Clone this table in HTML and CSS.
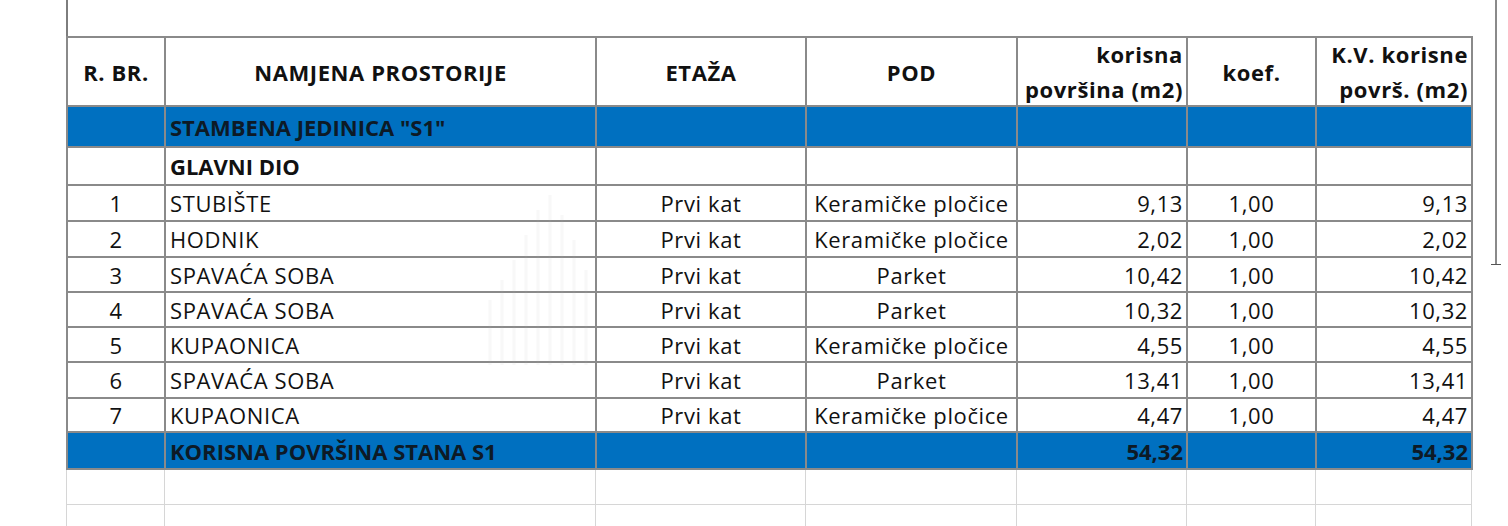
FILE: index.html
```html
<!DOCTYPE html>
<html lang="hr">
<head>
<meta charset="utf-8">
<title>Stambena jedinica S1</title>
<link rel="stylesheet" href="styles.css">
</head>
<body>
<div class="sheet">
  <div class="frame-top"></div>
  <div class="grid main">
    <div class="c hd">R. BR.</div>
    <div class="c hd">NAMJENA PROSTORIJE</div>
    <div class="c hd">ETAŽA</div>
    <div class="c hd">POD</div>
    <div class="c hd right two">korisna<br>površina (m2)</div>
    <div class="c hd">koef.</div>
    <div class="c hd right two">K.V. korisne<br>površ. (m2)</div>

    <div class="c blue"></div>
    <div class="c blue b left">STAMBENA JEDINICA "S1"</div>
    <div class="c blue"></div>
    <div class="c blue"></div>
    <div class="c blue"></div>
    <div class="c blue"></div>
    <div class="c blue"></div>

    <div class="c"></div>
    <div class="c b left">GLAVNI DIO</div>
    <div class="c"></div>
    <div class="c"></div>
    <div class="c"></div>
    <div class="c"></div>
    <div class="c"></div>

    <div class="c">1</div><div class="c left">STUBIŠTE</div><div class="c">Prvi kat</div><div class="c">Keramičke pločice</div><div class="c right">9,13</div><div class="c">1,00</div><div class="c right">9,13</div>
    <div class="c">2</div><div class="c left">HODNIK</div><div class="c">Prvi kat</div><div class="c">Keramičke pločice</div><div class="c right">2,02</div><div class="c">1,00</div><div class="c right">2,02</div>
    <div class="c">3</div><div class="c left">SPAVAĆA SOBA</div><div class="c">Prvi kat</div><div class="c">Parket</div><div class="c right">10,42</div><div class="c">1,00</div><div class="c right">10,42</div>
    <div class="c">4</div><div class="c left">SPAVAĆA SOBA</div><div class="c">Prvi kat</div><div class="c">Parket</div><div class="c right">10,32</div><div class="c">1,00</div><div class="c right">10,32</div>
    <div class="c">5</div><div class="c left">KUPAONICA</div><div class="c">Prvi kat</div><div class="c">Keramičke pločice</div><div class="c right">4,55</div><div class="c">1,00</div><div class="c right">4,55</div>
    <div class="c">6</div><div class="c left">SPAVAĆA SOBA</div><div class="c">Prvi kat</div><div class="c">Parket</div><div class="c right">13,41</div><div class="c">1,00</div><div class="c right">13,41</div>
    <div class="c">7</div><div class="c left">KUPAONICA</div><div class="c">Prvi kat</div><div class="c">Keramičke pločice</div><div class="c right">4,47</div><div class="c">1,00</div><div class="c right">4,47</div>

    <div class="c blue"></div>
    <div class="c blue b left">KORISNA POVRŠINA STANA S1</div>
    <div class="c blue"></div>
    <div class="c blue"></div>
    <div class="c blue b right">54,32</div>
    <div class="c blue"></div>
    <div class="c blue b right">54,32</div>
  </div>
  <div class="grid blank">
    <div class="e"></div><div class="e"></div><div class="e"></div><div class="e"></div><div class="e"></div><div class="e"></div><div class="e last"></div>
    <div class="e"></div><div class="e"></div><div class="e"></div><div class="e"></div><div class="e"></div><div class="e"></div><div class="e last"></div>
  </div>
  <div class="right-rule"><span class="tick"></span></div>
  <svg class="watermark" width="140" height="180" viewBox="0 0 140 180" aria-hidden="true">
    <g stroke="#b0b0b0" stroke-width="3" opacity="0.08">
      <line x1="20" y1="110" x2="20" y2="175"/>
      <line x1="32" y1="90" x2="32" y2="175"/>
      <line x1="44" y1="70" x2="44" y2="175"/>
      <line x1="56" y1="45" x2="56" y2="175"/>
      <line x1="68" y1="20" x2="68" y2="175"/>
      <line x1="80" y1="5" x2="80" y2="175"/>
      <line x1="92" y1="25" x2="92" y2="175"/>
      <line x1="104" y1="50" x2="104" y2="175"/>
      <line x1="116" y1="80" x2="116" y2="175"/>
    </g>
  </svg>
</div>
</body>
</html>
```

FILE: styles.css
```css
html, body {
  margin: 0;
  padding: 0;
  background: #ffffff;
}

body {
  font-family: "Open Sans", "Lato", "Liberation Sans", sans-serif;
  color: #111111;
  width: 1508px;
  height: 526px;
  overflow: hidden;
}

.sheet {
  position: relative;
  padding-left: 66px;
  height: 526px;
}

.frame-top {
  height: 36px;
  width: 0;
  border-left: 2px solid #7d7d7d;
}

.grid {
  display: grid;
  width: fit-content;
}

.main {
  grid-template-columns: 96px 429px 208px 209px 168px 127px 154px;
  grid-template-rows: 67px 39px 36px 34px 34px 33px 33px 33px 34px 32px 35px;
  gap: 2px;
  padding: 2px;
  background: #8a8a8a;
}

.c {
  background: #ffffff;
  display: flex;
  align-items: center;
  justify-content: center;
  font-size: 22px;
  letter-spacing: 0.6px;
  white-space: nowrap;
  padding: 0 1px;
  overflow: hidden;
}

.c.left { justify-content: flex-start; padding-left: 4px; }
.c.right { justify-content: flex-end; text-align: right; padding-right: 3px; }
.c.hd { font-weight: 700; letter-spacing: 0.6px; }
.c.b { font-weight: 700; letter-spacing: 0; }
.c.two { line-height: 35px; padding-top: 1px; }
.c.blue { background: #0070c0; color: #0d1a26; }

.blank {
  grid-template-columns: 98px 431px 210px 211px 170px 129px 157px;
  grid-template-rows: 35px 35px;
}

.e {
  box-sizing: border-box;
  border-left: 1px solid #d6d6d6;
  border-bottom: 1px solid #d6d6d6;
}
.e.last { border-right: 1px solid #d6d6d6; }

.right-rule {
  position: absolute;
  left: 1495px;
  top: 0;
  width: 2px;
  height: 264px;
  background: #8a8a8a;
}
.tick {
  position: absolute;
  left: -4px;
  bottom: -1px;
  width: 10px;
  height: 1px;
  background: #555555;
}

.watermark {
  position: absolute;
  left: 470px;
  top: 190px;
  pointer-events: none;
}
```
